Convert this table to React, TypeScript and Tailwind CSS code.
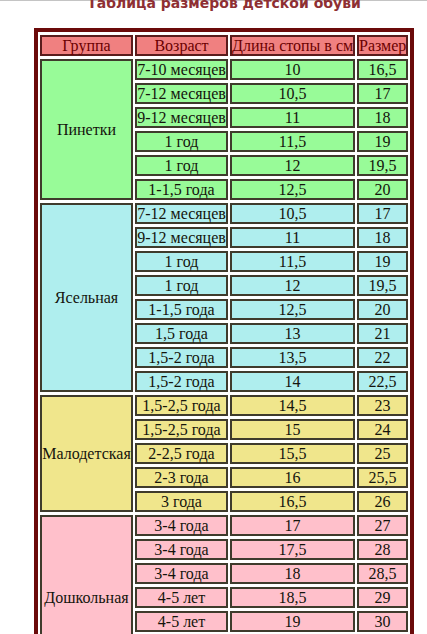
type Row = [string, string, string];

interface Group {
  name: string;
  bg: string;
  rows: Row[];
}

const groups: Group[] = [
  {
    name: "Пинетки",
    bg: "bg-[#98fb98]",
    rows: [
      ["7-10 месяцев", "10", "16,5"],
      ["7-12 месяцев", "10,5", "17"],
      ["9-12 месяцев", "11", "18"],
      ["1 год", "11,5", "19"],
      ["1 год", "12", "19,5"],
      ["1-1,5 года", "12,5", "20"],
    ],
  },
  {
    name: "Ясельная",
    bg: "bg-[#afeeee]",
    rows: [
      ["7-12 месяцев", "10,5", "17"],
      ["9-12 месяцев", "11", "18"],
      ["1 год", "11,5", "19"],
      ["1 год", "12", "19,5"],
      ["1-1,5 года", "12,5", "20"],
      ["1,5 года", "13", "21"],
      ["1,5-2 года", "13,5", "22"],
      ["1,5-2 года", "14", "22,5"],
    ],
  },
  {
    name: "Малодетская",
    bg: "bg-[#f0e68c]",
    rows: [
      ["1,5-2,5 года", "14,5", "23"],
      ["1,5-2,5 года", "15", "24"],
      ["2-2,5 года", "15,5", "25"],
      ["2-3 года", "16", "25,5"],
      ["3 года", "16,5", "26"],
    ],
  },
  {
    name: "Дошкольная",
    bg: "bg-[#ffc0cb]",
    rows: [
      ["3-4 года", "17", "27"],
      ["3-4 года", "17,5", "28"],
      ["3-4 года", "18", "28,5"],
      ["4-5 лет", "18,5", "29"],
      ["4-5 лет", "19", "30"],
      ["5-6 лет", "19,5", "31"],
      ["5-6 лет", "20", "32"],
    ],
  },
];

const cell = "border-2 border-[#3f3b2c] p-0 text-center leading-[17px] whitespace-nowrap";
const headCell =
  "border-2 border-[#5a1c1c] bg-[#f08080] p-0 text-center font-normal leading-[17px] text-[#6b0000] whitespace-nowrap";

const App = () => {
  return (
    <div className="min-h-screen bg-white border-t border-[#c4c4c4]">
      <div className="pl-[34px] w-[414px]">
        <h1 className="-mt-[6px] text-center text-[14px] leading-[16px] font-bold text-[#8e2f33] font-['DejaVu_Sans',sans-serif]">
          Таблица размеров детской обуви
        </h1>

        <table className="mt-[17px] w-[380px] table-fixed border-4 border-[#6b0a0a] border-separate border-spacing-x-[2px] border-spacing-y-[3px] bg-white text-[16px] text-[#14140c] font-['Liberation_Serif',serif]">
          <thead>
            <tr>
              <th className={`${headCell} w-[93px]`}>Группа</th>
              <th className={`${headCell} w-[93px]`}>Возраст</th>
              <th className={`${headCell} w-[125px]`}>Длина стопы в см</th>
              <th className={`${headCell} w-[51px]`}>Размер</th>
            </tr>
          </thead>
          <tbody>
            {groups.map((group) =>
              group.rows.map((row, i) => (
                <tr key={group.name + i}>
                  {i === 0 && (
                    <td rowSpan={group.rows.length} className={`${cell} ${group.bg}`}>
                      {group.name}
                    </td>
                  )}
                  <td className={`${cell} ${group.bg}`}>{row[0]}</td>
                  <td className={`${cell} ${group.bg}`}>{row[1]}</td>
                  <td className={`${cell} ${group.bg}`}>{row[2]}</td>
                </tr>
              ))
            )}
          </tbody>
        </table>
      </div>
    </div>
  );
};

export default App;
